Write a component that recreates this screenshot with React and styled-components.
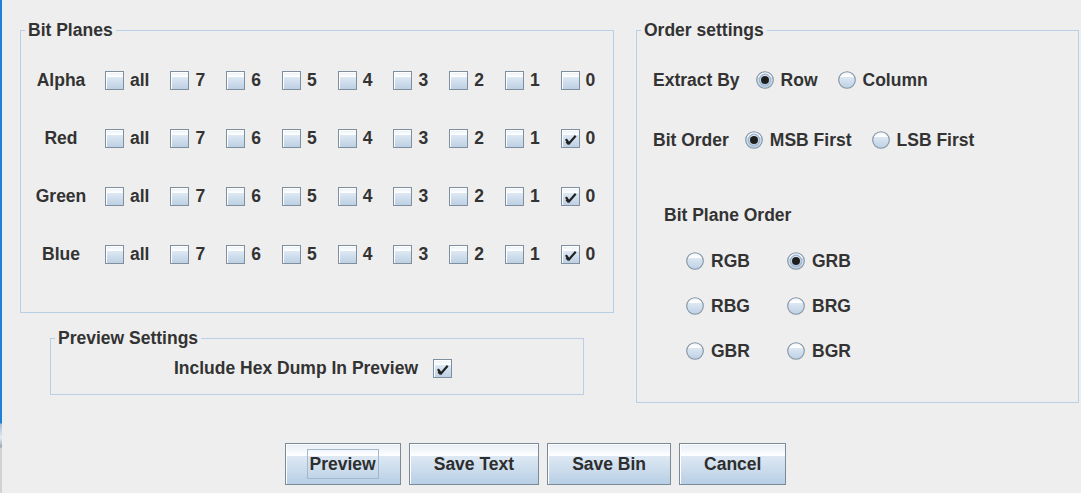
import React, { useId } from 'react';
import styled, { createGlobalStyle } from 'styled-components';

const GlobalStyle = createGlobalStyle`
  html, body { margin: 0; padding: 0; background: #eeeeee; }
  body { font-family: "Liberation Sans", Arial, sans-serif; }
  * { box-sizing: border-box; }
`;

const Window = styled.div`
  display: flex;
  width: 1081px;
  height: 493px;
  overflow: hidden;
  background: #eeeeee;
  color: #333333;
  font: bold 17.5px "Liberation Sans", Arial, sans-serif;
`;

const DesktopEdge = styled.div`
  flex: 0 0 2px;
  background: linear-gradient(
    to bottom,
    #1f80d8 0px,
    #1f80d8 423px,
    #a9bfd4 424px,
    #e4ebf2 438px,
    #9aa6b2 447px,
    #d2d2d2 448px,
    #d2d2d2 100%
  );
`;

const Dialog = styled.div`
  flex: 1;
  display: flex;
  flex-direction: column;
  padding-top: 20px;
`;

const Panels = styled.div`
  display: flex;
  align-items: flex-start;
  padding-left: 18px;
`;

const LeftColumn = styled.div`
  display: flex;
  flex-direction: column;
  align-items: center;
  width: 594px;
`;

const Group = styled.fieldset`
  margin: ${p => p.$margin || '0'};
  padding: 0;
  min-width: 0;
  width: ${p => p.$width}px;
  border: 1px solid #b8cfe5;
`;

const Title = styled.legend`
  margin-left: 4px;
  padding: 0 3px;
  font: inherit;
  line-height: 20px;
  color: #333333;
`;

const GroupBody = styled.div`
  padding: ${p => p.$pad};
`;

/* ---- Bit planes ---- */
const PlaneRow = styled.div`
  display: flex;
  align-items: center;
  height: 58px;
`;

const PlaneName = styled.div`
  width: 56px;
  margin-right: 16px;
  text-align: center;
  line-height: 20px;
`;

const BitList = styled.div`
  display: flex;
  align-items: center;
  gap: 21px;
`;

const CheckItem = styled.label`
  display: inline-flex;
  align-items: center;
  gap: ${p => (p.$gap != null ? p.$gap : 6)}px;
  line-height: 20px;
`;

const Box = styled.span`
  position: relative;
  display: inline-block;
  width: 19px;
  height: 19px;
  border: 1px solid #7f8f9e;
  background: linear-gradient(to bottom, #e9f0f7 0%, #ffffff 30%, #dde8f3 31%, #bdd0e3 100%);
  box-shadow: inset 1px 1px 0 #ffffff;
`;

const CheckMark = styled.svg`
  position: absolute;
  left: 0;
  top: 0;
`;

function CheckBox({ checked }) {
  return (
    <Box>
      {checked && (
        <CheckMark width="17" height="17" viewBox="0 0 17 17">
          <path d="M4.5 10 L7 13.5 L13 6.5" fill="none" stroke="#222" strokeWidth="2.2" strokeLinecap="square" />
          <path d="M4.5 11.5 L6.5 14" fill="none" stroke="#222" strokeWidth="2.4" />
        </CheckMark>
      )}
    </Box>
  );
}

function Bit({ label, checked }) {
  return (
    <CheckItem>
      <CheckBox checked={checked} />
      <span>{label}</span>
    </CheckItem>
  );
}

/* ---- Radios ---- */
const RadioSvg = styled.svg`
  flex: 0 0 18px;
  display: block;
`;

function RadioMark({ checked }) {
  const id = useId().replace(/:/g, '');
  return (
    <RadioSvg width="18" height="18" viewBox="0 0 18 18">
      <defs>
        <linearGradient id={`g${id}`} x1="0" y1="0" x2="0" y2="1">
          <stop offset="0" stopColor="#eef3f9" />
          <stop offset="0.3" stopColor="#ffffff" />
          <stop offset="0.31" stopColor="#dde8f3" />
          <stop offset="1" stopColor="#bcd0e4" />
        </linearGradient>
      </defs>
      <circle cx="9" cy="9" r="8.3" fill={`url(#g${id})`} stroke="#8393a2" strokeWidth="1.1" />
      {checked && (
        <>
          <circle cx="9" cy="9" r="5.6" fill="none" stroke="#9fb9d4" strokeWidth="1.6" />
          <circle cx="9" cy="9" r="4" fill="#1e1e1e" />
        </>
      )}
    </RadioSvg>
  );
}

const RadioItem = styled.label`
  display: inline-flex;
  align-items: center;
  gap: 7px;
  line-height: 20px;
`;

function Radio({ label, checked }) {
  return (
    <RadioItem>
      <RadioMark checked={checked} />
      <span>{label}</span>
    </RadioItem>
  );
}

const OptionRow = styled.div`
  display: flex;
  align-items: center;
  height: 60px;
`;

const OptionLabel = styled.span`
  line-height: 20px;
  margin-right: 16px;
`;

const RadioGroup = styled.div`
  display: flex;
  align-items: center;
  gap: 20px;
`;

const PlaneOrder = styled.div`
  padding-left: 11px;
  margin-top: 35px;
`;

const PlaneOrderLabel = styled.div`
  line-height: 20px;
`;

const PlaneGrid = styled.div`
  display: grid;
  grid-template-columns: 101px auto;
  grid-auto-rows: 45px;
  align-items: center;
  justify-content: start;
  margin: 13px 0 0 22px;
`;

/* ---- Preview ---- */
const HexRow = styled.div`
  display: flex;
  align-items: center;
  justify-content: center;
  gap: 15px;
  height: 24px;
  padding-right: 8px;
`;

/* ---- Buttons ---- */
const ButtonBar = styled.div`
  display: flex;
  justify-content: center;
  gap: 8px;
  margin-top: 40px;
  padding-right: 12px;
`;

const Button = styled.button`
  height: 42px;
  padding: 0 24px;
  border: 1px solid #7a8a99;
  border-radius: 0;
  box-shadow: inset 1px 1px 0 #ffffff;
  background: linear-gradient(to bottom, #e6eef7 0%, #ffffff 30%, #dde8f3 31%, #b8cfe5 100%);
  color: #2e2e2e;
  font: inherit;
  line-height: 20px;
  cursor: default;
`;

const FocusRing = styled.span`
  display: inline-block;
  margin: 0 -3px;
  padding: 0 2px;
  line-height: 28px;
  border: 1px solid #a3b8cc;
`;

const planes = [
  { name: 'Alpha', on: [] },
  { name: 'Red', on: ['0'] },
  { name: 'Green', on: ['0'] },
  { name: 'Blue', on: ['0'] },
];
const bits = ['7', '6', '5', '4', '3', '2', '1', '0'];

export default function App() {
  return (
    <>
      <GlobalStyle />
      <Window>
        <DesktopEdge />
        <Dialog>
          <Panels>
            <LeftColumn>
              <Group $width={594}>
                <Title>Bit Planes</Title>
                <GroupBody $pad="11px 0 29px 12px">
                  {planes.map(p => (
                    <PlaneRow key={p.name}>
                      <PlaneName>{p.name}</PlaneName>
                      <BitList>
                        <Bit label="all" />
                        {bits.map(b => (
                          <Bit key={b} label={b} checked={p.on.includes(b)} />
                        ))}
                      </BitList>
                    </PlaneRow>
                  ))}
                </GroupBody>
              </Group>
              <Group $width={534} $margin="15px 0 0 0">
                <Title>Preview Settings</Title>
                <GroupBody $pad="8px 0 14px 0">
                  <HexRow>
                    <CheckItem $gap={15}>
                      <span>Include Hex Dump In Preview</span>
                      <CheckBox checked />
                    </CheckItem>
                  </HexRow>
                </GroupBody>
              </Group>
            </LeftColumn>
            <Group $width={443} $margin="0 0 0 22px">
              <Title>Order settings</Title>
              <GroupBody $pad="10px 0 29px 16px">
                <OptionRow>
                  <OptionLabel>Extract By</OptionLabel>
                  <RadioGroup>
                    <Radio label="Row" checked />
                    <Radio label="Column" />
                  </RadioGroup>
                </OptionRow>
                <OptionRow>
                  <OptionLabel>Bit Order</OptionLabel>
                  <RadioGroup>
                    <Radio label="MSB First" checked />
                    <Radio label="LSB First" />
                  </RadioGroup>
                </OptionRow>
                <PlaneOrder>
                  <PlaneOrderLabel>Bit Plane Order</PlaneOrderLabel>
                  <PlaneGrid>
                    <Radio label="RGB" />
                    <Radio label="GRB" checked />
                    <Radio label="RBG" />
                    <Radio label="BRG" />
                    <Radio label="GBR" />
                    <Radio label="BGR" />
                  </PlaneGrid>
                </PlaneOrder>
              </GroupBody>
            </Group>
          </Panels>
          <ButtonBar>
            <Button>
              <FocusRing>Preview</FocusRing>
            </Button>
            <Button>Save Text</Button>
            <Button>Save Bin</Button>
            <Button>Cancel</Button>
          </ButtonBar>
        </Dialog>
      </Window>
    </>
  );
}
